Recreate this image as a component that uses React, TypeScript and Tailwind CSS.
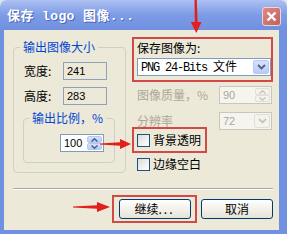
import React from "react";

const CJK = "font-['Noto_Sans_CJK_SC',sans-serif]";
const NUM = "font-['Liberation_Sans',sans-serif]";

function ChevDown({ color = "#4d6185" }: { color?: string }) {
  return (
    <svg width="9" height="6" viewBox="0 0 9 6">
      <polyline points="1,1 4.5,4.5 8,1" fill="none" stroke={color} strokeWidth="1.8" />
    </svg>
  );
}
function ChevUp({ color = "#4d6185" }: { color?: string }) {
  return (
    <svg width="7" height="4" viewBox="0 0 7 4">
      <polyline points="0.5,3.5 3.5,0.8 6.5,3.5" fill="none" stroke={color} strokeWidth="1.5" />
    </svg>
  );
}
function ChevDn({ color = "#4d6185" }: { color?: string }) {
  return (
    <svg width="7" height="4" viewBox="0 0 7 4">
      <polyline points="0.5,0.5 3.5,3.2 6.5,0.5" fill="none" stroke={color} strokeWidth="1.5" />
    </svg>
  );
}

function SpinButtons({ disabled }: { disabled?: boolean }) {
  const c = disabled ? "#c9c7ba" : "#4d6185";
  const btn = disabled
    ? "flex-1 flex items-center justify-center rounded-[2px] border border-[#e2e0d6] bg-[#f4f3ee]"
    : "flex-1 flex items-center justify-center rounded-[2px] border border-[#b7c8f0] bg-gradient-to-b from-[#d6e2fc] to-[#b8cbf7]";
  return (
    <div className="ml-auto flex flex-col w-[15px] h-full">
      <div className={btn}>
        <ChevUp color={c} />
      </div>
      <div className={btn}>
        <ChevDn color={c} />
      </div>
    </div>
  );
}

function Checkbox({ label }: { label: string }) {
  return (
    <div className="flex items-center">
      <div className="w-[13px] h-[13px] border border-[#1c5180] bg-gradient-to-br from-[#dcdcd7] to-white" />
      <span className={`ml-[3px] text-[12px] leading-[14px] text-black ${CJK}`}>{label}</span>
    </div>
  );
}

export default function App() {
  return (
    <div className="relative w-[287px] h-[234px] overflow-hidden bg-[#dbe3f2]">
      <div className="flex flex-col w-full h-full rounded-t-[7px] overflow-hidden">
        {/* title bar */}
        <div className="h-[30px] shrink-0 flex items-start pt-[7px] pl-[7px] pr-[6px] bg-gradient-to-b from-[#adc1f2] via-[#7d9be5] to-[#7090e0]">
          <span className="leading-[19px] text-[13px] font-bold text-white tracking-[0.4px] font-['Liberation_Mono','Noto_Sans_CJK_SC',monospace] [text-shadow:1px_1px_0_#4a66b8]">
            保存 logo 图像...
          </span>
          <div className="ml-auto w-[19px] h-[19px] rounded-[3px] border border-[#f1d6d4] bg-gradient-to-br from-[#dd8a84] to-[#c0625e] flex items-center justify-center">
            <svg width="11" height="11" viewBox="0 0 11 11">
              <line x1="1.5" y1="1.5" x2="9.5" y2="9.5" stroke="white" strokeWidth="2.4" />
              <line x1="9.5" y1="1.5" x2="1.5" y2="9.5" stroke="white" strokeWidth="2.4" />
            </svg>
          </div>
        </div>

        {/* body */}
        <div className="flex-1 flex flex-col bg-[#ece9d8] border-l-[4px] border-r-[8px] border-b-[4px] border-[#7090e0] pl-[9px] pr-[6px] pt-[7px]">
          <div className="flex items-start">
            {/* left group */}
            <fieldset className="mt-[4px] w-[113px] h-[132px] border border-[#d0d0bf] rounded-[4px]">
              <legend className={`ml-[6px] px-[3px] text-[12px] leading-[12px] text-[#0046d5] ${CJK}`}>输出图像大小</legend>
              <div className="mt-[9px] pl-[10px] flex items-center">
                <span className={`w-[39px] text-[12px] leading-[14px] text-black ${CJK}`}>宽度:</span>
                <div className={`w-[44px] h-[18px] border border-[#8fa2ba] flex items-center pl-[3px] text-[11px] text-black ${NUM}`}>241</div>
              </div>
              <div className="mt-[7px] pl-[10px] flex items-center">
                <span className={`w-[39px] text-[12px] leading-[14px] text-black ${CJK}`}>高度:</span>
                <div className={`w-[44px] h-[18px] border border-[#8fa2ba] flex items-center pl-[3px] text-[11px] text-black ${NUM}`}>283</div>
              </div>
              <fieldset className="mt-[7px] ml-[9px] w-[92px] h-[51px] border border-[#d0d0bf] rounded-[4px]">
                <legend className={`ml-[5px] px-[3px] text-[12px] leading-[12px] text-[#0046d5] ${CJK}`}>输出比例，%</legend>
                <div className="mt-[10px] ml-[36px] w-[44px] h-[18px] border border-[#7f9db9] bg-white flex items-center p-[1px]">
                  <span className={`pl-[2px] text-[11px] text-black ${NUM}`}>100</span>
                  <SpinButtons />
                </div>
              </fieldset>
            </fieldset>

            {/* right column */}
            <div className="ml-[6px] w-[141px] flex flex-col">
              <div className="w-[141px] h-[45px] border-2 border-[#d24a48] pl-[3px] pt-[3px]">
                <div className={`text-[12px] leading-[12px] text-black ${CJK}`}>保存图像为:</div>
                <div className="mt-[4px] w-[134px] h-[18px] border border-[#7f9db9] bg-white flex items-center p-[1px]">
                  <span className="pl-[2px] text-[12px] text-black font-['Liberation_Mono','Noto_Sans_CJK_SC',monospace]">
                    <span className="tracking-[-1.2px]">PNG 24-Bits </span>
                    <span className={CJK}>文件</span>
                  </span>
                  <div className="ml-auto w-[16px] h-full rounded-[2px] border border-[#b7c8f0] bg-gradient-to-b from-[#d6e2fc] to-[#b8cbf7] flex items-center justify-center">
                    <ChevDown />
                  </div>
                </div>
              </div>

              <div className="mt-[4px] pl-[5px] flex items-center">
                <span className={`w-[82px] text-[12px] leading-[14px] text-[#aca899] ${CJK}`}>图像质量，%</span>
                <div className="w-[53px] h-[18px] border border-[#c9c7ba] bg-[#f5f4ef] flex items-center p-[1px]">
                  <span className={`pl-[2px] text-[11px] text-[#aca899] ${NUM}`}>90</span>
                  <SpinButtons disabled />
                </div>
              </div>

              <div className="mt-[8px] pl-[5px] flex items-center">
                <span className={`w-[82px] text-[12px] leading-[14px] text-[#aca899] ${CJK}`}>分辨率</span>
                <div className="w-[53px] h-[18px] border border-[#c9c7ba] bg-[#f5f4ef] flex items-center p-[1px]">
                  <span className={`pl-[2px] text-[11px] text-[#aca899] ${NUM}`}>72</span>
                  <div className="ml-auto w-[16px] h-full rounded-[2px] border border-[#e2e0d6] bg-[#f4f3ee] flex items-center justify-center">
                    <ChevDown color="#c9c7ba" />
                  </div>
                </div>
              </div>

              <div className="-mt-[3px] w-[75px] h-[26px] border-2 border-[#d24a48] pl-[3px] flex items-center">
                <Checkbox label="背景透明" />
              </div>
              <div className="mt-[4px] pl-[5px]">
                <Checkbox label="边缘空白" />
              </div>
            </div>
          </div>

          {/* separator */}
          <div className="mt-[15px] h-[2px] border-t border-b border-t-[#aca899] border-b-white" />

          {/* buttons */}
          <div className="mt-[5px] flex justify-end items-center gap-[4px]">
            <div className="w-[85px] h-[28px] border-2 border-[#d24a48] flex items-center justify-center">
              <button className={`w-[72px] h-[20px] border border-[#003c74] rounded-[3px] bg-gradient-to-b from-white to-[#e6e3d6] text-[12px] leading-[14px] text-black ${CJK}`}>
                继续<span className="tracking-[2px]">...</span>
              </button>
            </div>
            <button className={`w-[72px] h-[20px] border border-[#003c74] rounded-[3px] bg-gradient-to-b from-white to-[#e6e3d6] text-[12px] leading-[14px] text-black ${CJK}`}>
              取消
            </button>
          </div>
        </div>
      </div>

      {/* red annotation arrows */}
      <svg className="absolute inset-0 pointer-events-none" width="287" height="234" viewBox="0 0 287 234">
        <polygon points="194.5,0 196.8,0 197.6,22 201.5,22 196.3,33 190.8,22 194.8,22" fill="#e31f1c" />
        <polygon points="100,143.5 120,142.3 120,139 131,144 120,149 120,145.7 100,144.5" fill="#e31f1c" />
        <polygon points="73,206.5 97,205.3 97,202 110,207 97,212 97,208.7 73,207.5" fill="#e31f1c" />
      </svg>
    </div>
  );
}
